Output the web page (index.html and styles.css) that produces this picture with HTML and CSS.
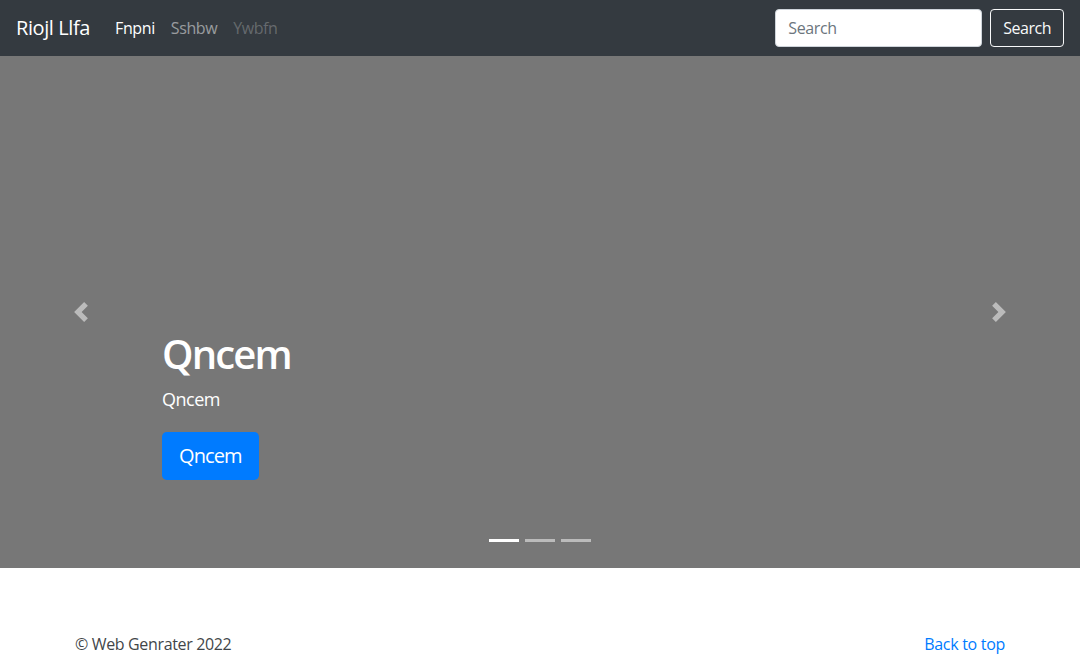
FILE: index.html
```html
<!DOCTYPE html>
<html lang="en">
<head>
<meta charset="utf-8">
<title>Riojl Llfa</title>
<link rel="stylesheet" href="styles.css">
</head>
<body>
<header class="navbar">
  <div class="nav-left">
    <a class="brand" href="#">Riojl Llfa</a>
    <nav class="nav-links">
      <a class="nav-link active" href="#">Fnpni</a>
      <a class="nav-link" href="#">Sshbw</a>
      <a class="nav-link disabled" href="#">Ywbfn</a>
    </nav>
  </div>
  <form class="search">
    <input class="search-input" type="text" placeholder="Search">
    <button class="search-btn" type="button">Search</button>
  </form>
</header>

<main>
  <section class="carousel">
    <div class="carousel-item">
      <div class="carousel-caption">
        <h1 class="caption-title">Qncem</h1>
        <p class="caption-text">Qncem</p>
        <p class="caption-action"><a class="btn-primary" href="#">Qncem</a></p>
      </div>
    </div>
    <a class="control control-prev" href="#" aria-label="Previous">
      <svg width="20" height="20" viewBox="0 0 8 8"><path fill="#fff" d="M5.25 0l-4 4 4 4 1.5-1.5L4.25 4l2.5-2.5L5.25 0z"/></svg>
    </a>
    <a class="control control-next" href="#" aria-label="Next">
      <svg width="20" height="20" viewBox="0 0 8 8"><path fill="#fff" d="M2.75 0l-1.5 1.5L3.75 4l-2.5 2.5L2.75 8l4-4-4-4z"/></svg>
    </a>
    <ol class="indicators">
      <li class="indicator active"></li>
      <li class="indicator"></li>
      <li class="indicator"></li>
    </ol>
  </section>

  <footer class="footer">
    <p class="footer-copy">© Web Genrater 2022</p>
    <a class="footer-top" href="#">Back to top</a>
  </footer>
</main>
</body>
</html>
```

FILE: styles.css
```css
* { box-sizing: border-box; }
html, body { margin: 0; padding: 0; }
body {
  font-family: "Open Sans", "Noto Sans", sans-serif;
  font-size: 16px;
  line-height: 1.5;
  color: #212529;
  background: #fff;
}
a { text-decoration: none; }

.navbar {
  height: 56px;
  background: #343a40;
  display: flex;
  align-items: center;
  justify-content: space-between;
  padding: 0 16px;
}
.nav-left { display: flex; align-items: center; }
.brand {
  color: #fff;
  font-size: 20px;
  line-height: 30px;
  margin-right: 17px;
  letter-spacing: -0.4px;
}
.nav-links { display: flex; }
.nav-link {
  color: rgba(255,255,255,0.5);
  padding: 8px 8px;
  letter-spacing: -0.4px;
}
.nav-link.active { color: #fff; }
.nav-link.disabled { color: rgba(255,255,255,0.25); }

.search { display: flex; align-items: center; }
.search-input {
  width: 207px;
  height: 38px;
  border: 1px solid #ced4da;
  border-radius: 4px;
  padding: 6px 12px;
  font: inherit;
  font-size: 16px;
  color: #495057;
  margin-right: 8px;
  letter-spacing: -0.4px;
}
.search-input::placeholder { color: #6c757d; }
.search-btn {
  height: 38px;
  padding: 6px 12px;
  border: 1px solid #f8f9fa;
  border-radius: 4px;
  background: transparent;
  color: #f8f9fa;
  font: inherit;
  font-size: 16px;
  letter-spacing: -0.5px;
}

.carousel {
  position: relative;
  height: 512px;
  background: #777;
  margin-bottom: 64px;
}
.carousel-item { height: 100%; position: relative; }
.carousel-caption {
  position: absolute;
  left: 15%;
  right: 15%;
  bottom: 68px;
  padding: 20px 0;
  color: #fff;
}
.caption-title {
  margin: 0 0 8px;
  font-size: 40px;
  font-weight: 600;
  line-height: 48px;
  letter-spacing: -1.8px;
}
.caption-text {
  margin: 0 0 19px;
  font-size: 18px;
  line-height: 27px;
  letter-spacing: -0.5px;
}
.caption-action { margin: 0; line-height: 0; }
.btn-primary {
  display: inline-block;
  background: #007bff;
  color: #fff;
  font-size: 20px;
  line-height: 30px;
  padding: 9px 17px;
  border-radius: 4.8px;
  letter-spacing: -0.9px;
}

.control {
  position: absolute;
  top: 0;
  bottom: 0;
  width: 15%;
  display: flex;
  align-items: center;
  justify-content: center;
  opacity: 0.5;
}
.control-prev { left: 0; }
.control-next { right: 0; }

.indicators {
  position: absolute;
  left: 0;
  right: 0;
  bottom: 26px;
  margin: 0;
  padding: 0;
  list-style: none;
  display: flex;
  justify-content: center;
  gap: 6px;
}
.indicator {
  width: 30px;
  height: 3px;
  background: #fff;
  opacity: 0.5;
}
.indicator.active { opacity: 1; }

.footer {
  width: 930px;
  margin: 0 auto;
  display: flex;
  justify-content: space-between;
  align-items: flex-start;
}
.footer-copy {
  margin: 0;
  color: #212529;
  letter-spacing: -0.35px;
  opacity: 0.85;
}
.footer-top { color: #007bff; letter-spacing: -0.3px; }
```
